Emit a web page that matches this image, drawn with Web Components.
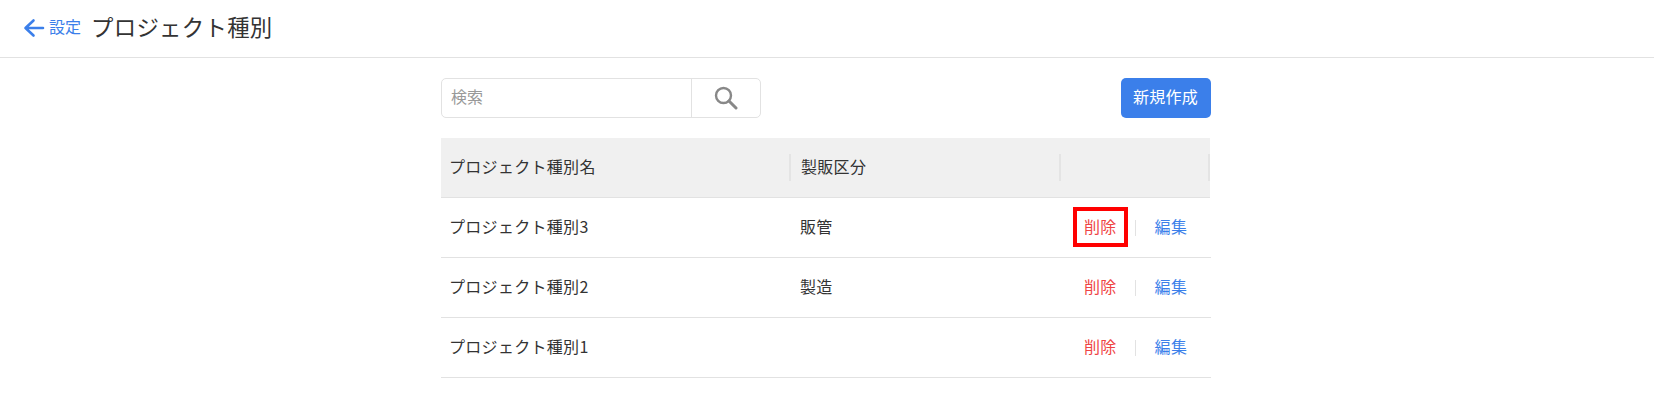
<!DOCTYPE html>
<html lang="ja">
<head>
<meta charset="utf-8">
<title>プロジェクト種別</title>
<style>
  html, body { margin: 0; background: #fff; }
  body { font-family: "Noto Sans CJK JP", "Liberation Sans", sans-serif; color: #333; }
</style>
</head>
<body>
<page-header title-text="プロジェクト種別" back-text="設定"></page-header>
<main-panel>
  <tool-bar></tool-bar>
  <type-table>
    <type-row name="プロジェクト種別3" kind="販管" marked></type-row>
    <type-row name="プロジェクト種別2" kind="製造"></type-row>
    <type-row name="プロジェクト種別1" kind=""></type-row>
  </type-table>
</main-panel>

<script>
// top bar with back link
class PageHeader extends HTMLElement {
  constructor() {
    super();
    const shadow = this.attachShadow({ mode: "open" });
    shadow.innerHTML = `
      <style>
        :host { display: flex; align-items: center; height: 53px; border-bottom: 1px solid #e2e2e2; padding: 0 0 4px 23px; }
        svg { display: block; width: 22px; height: 22px; margin-right: 4px; margin-top: 3px; }
        .back { font-size: 16px; color: #3b7fea; margin-right: 10px; margin-bottom: 1px; }
        h1 { margin: 0 0 2px; font-size: 22.400px; letter-spacing: 0.3px; font-weight: 400; color: #333; }
      </style>
      <svg viewBox="0 0 22 22" fill="none" stroke="#3b7fea" stroke-width="2.6" stroke-linecap="round" stroke-linejoin="round">
        <path d="M20 11H3M10.500 3.500L2.500 11l8 7.500"/>
      </svg>
      <span class="back">${this.getAttribute("back-text")}</span>
      <h1>${this.getAttribute("title-text")}</h1>
    `;
  }
}
customElements.define("page-header", PageHeader);

class MainPanel extends HTMLElement {
  constructor() {
    super();
    const shadow = this.attachShadow({ mode: "open" });
    shadow.innerHTML = `
      <style>
        :host { display: block; width: 770px; margin: 20px 0 0 441px; }
      </style>
      <slot></slot>
    `;
  }
}
customElements.define("main-panel", MainPanel);

// search box and create button
class ToolBar extends HTMLElement {
  constructor() {
    super();
    const shadow = this.attachShadow({ mode: "open" });
    shadow.innerHTML = `
      <style>
        :host { display: flex; justify-content: space-between; margin-bottom: 20px; }
        .search { display: flex; width: 320px; height: 40px; box-sizing: border-box; border: 1px solid #e2e2e2; border-radius: 5px; }
        .field { flex: 1; padding-left: 9px; font-size: 16px; line-height: 34px; color: #999; }
        .icon { width: 68px; border-left: 1px solid #e2e2e2; display: flex; align-items: center; justify-content: center; }
        svg { width: 24px; height: 24px; display: block; margin-bottom: 1px; }
        button { width: 90px; height: 40px; border: 0; border-radius: 5px; background: #3b7fea; color: #fff; font: inherit; font-size: 16px; letter-spacing: 0.3px; padding: 0 1px 4px 0; }
      </style>
      <div class="search">
        <div class="field">検索</div>
        <div class="icon">
          <svg viewBox="0 0 24 24" fill="none" stroke="#888" stroke-linecap="round">
            <circle cx="9.500" cy="9.500" r="7.500" stroke-width="2.400"/>
            <path d="M15 15l7 7" stroke-width="3"/>
          </svg>
        </div>
      </div>
      <button>新規作成</button>
    `;
  }
}
customElements.define("tool-bar", ToolBar);

class TypeTable extends HTMLElement {
  constructor() {
    super();
    const shadow = this.attachShadow({ mode: "open" });
    shadow.innerHTML = `
      <style>
        :host { display: block; font-size: 16px; letter-spacing: 0.3px; }
        .head { display: grid; grid-template-columns: 350px 270px 149px; width: 769px; height: 59px; background: #f0f0f0; border-bottom: 1px solid #e2e2e2; align-items: center; }
        .cell { height: 27px; padding-left: 8px; border-right: 2px solid #e4e4e4; box-sizing: border-box; }
        .cell span { display: block; line-height: 25px; }
        .cell + .cell { padding-left: 10px; }
      </style>
      <div class="head">
        <div class="cell"><span>プロジェクト種別名</span></div>
        <div class="cell"><span>製販区分</span></div>
        <div class="cell"></div>
      </div>
      <slot></slot>
    `;
  }
}
customElements.define("type-table", TypeTable);

class TypeRow extends HTMLElement {
  constructor() {
    super();
    const shadow = this.attachShadow({ mode: "open" });
    const marked = this.hasAttribute("marked");
    shadow.innerHTML = `
      <style>
        :host { display: grid; grid-template-columns: 349px 270px 1fr; height: 59px; border-bottom: 1px solid #e2e2e2; align-items: center; }
        .name { padding: 0 0 4px 8px; }
        .kind { padding: 0 0 4px 10px; }
        .actions { display: flex; align-items: center; position: relative; height: 100%; }
        .del { color: #ef4444; margin-left: 24px; padding-bottom: 4px; }
        .sep { width: 1px; height: 16px; background: #e2e2e2; margin: 0 19px 0 18px; }
        .edit { color: #3b7fea; padding-bottom: 4px; }
        .mark { position: absolute; left: 13px; top: 9px; width: 55px; height: 40px; box-sizing: border-box; border: 4px solid #f00; }
      </style>
      <div class="name">${this.getAttribute("name")}</div>
      <div class="kind">${this.getAttribute("kind")}</div>
      <div class="actions">
        <span class="del">削除</span><span class="sep"></span><span class="edit">編集</span>
        ${marked ? '<div class="mark"></div>' : ""}
      </div>
    `;
  }
}
customElements.define("type-row", TypeRow);
</script>
</body>
</html>
